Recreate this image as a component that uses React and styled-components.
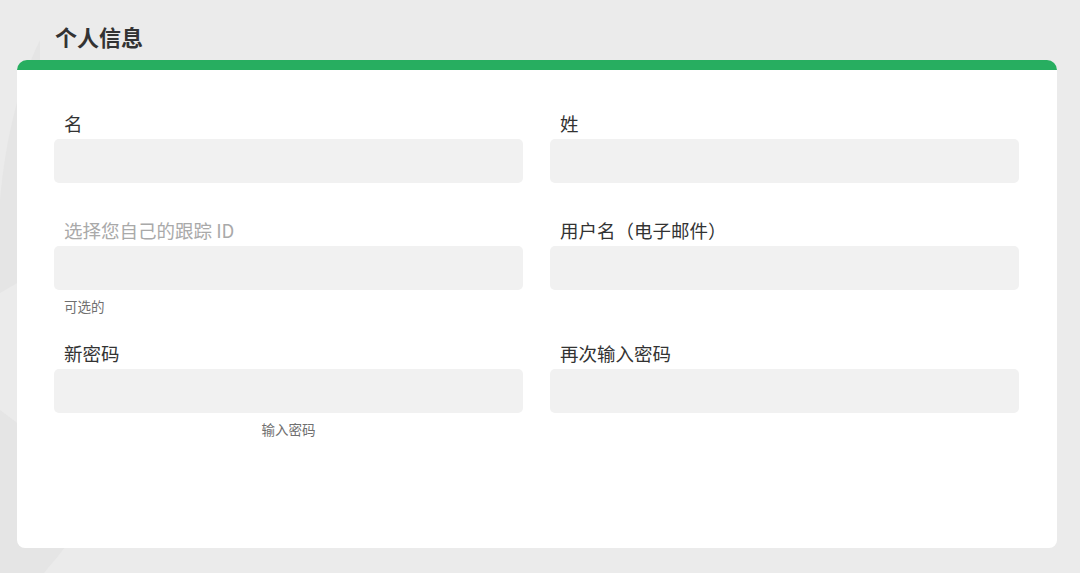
import React from "react";
import styled, { createGlobalStyle } from "styled-components";

const GlobalStyle = createGlobalStyle`
  html, body {
    margin: 0;
    padding: 0;
    background: #ebebeb;
  }
  body {
    font-family: "Noto Sans CJK SC", "Noto Sans", sans-serif;
    color: #333;
  }
  * { box-sizing: border-box; }
`;

const Page = styled.div`
  position: relative;
  width: 1080px;
  height: 573px;
  overflow: hidden;
  padding: 21px 23px 0 17px;
`;

const Decoration = styled.svg`
  position: absolute;
  left: 0;
  top: 0;
  width: 1080px;
  height: 573px;
  z-index: 0;
`;

const Content = styled.div`
  position: relative;
  z-index: 1;
`;

const Title = styled.h1`
  margin: 0 0 9px 38px;
  font-size: 22px;
  line-height: 30px;
  font-weight: 700;
  color: #333;
`;

const Card = styled.section`
  width: 1040px;
  height: 488px;
  background: #fff;
  border-top: 10px solid #27ae60;
  border-radius: 10px 10px 8px 8px;
  padding: 41px 38px 0 37px;
  display: flex;
  flex-direction: column;
`;

const Row = styled.div`
  display: grid;
  grid-template-columns: 469px 469px;
  column-gap: 27px;
  align-items: start;
  margin-top: ${(p) => p.$top || 0}px;
`;

const Field = styled.div`
  display: flex;
  flex-direction: column;
`;

const Label = styled.label`
  display: block;
  padding-left: 10px;
  margin-bottom: 4px;
  font-size: 18.5px;
  line-height: 24px;
  color: ${(p) => (p.$muted ? "#a9a9a9" : "#333")};
`;

const Input = styled.input`
  display: block;
  width: 100%;
  height: 44px;
  border: none;
  border-radius: 5px;
  background: #f1f1f1;
  outline: none;
  font-family: inherit;
  font-size: 16px;
  padding: 0 10px;
`;

const Hint = styled.div`
  margin-top: 6px;
  padding-left: ${(p) => (p.$center ? 0 : 10)}px;
  font-size: 13.5px;
  line-height: 20px;
  color: #6f6f6f;
  text-align: ${(p) => (p.$center ? "center" : "left")};
`;

export default function App() {
  return (
    <>
      <GlobalStyle />
      <Page>
        <Decoration viewBox="0 0 1080 573" aria-hidden="true">
          <path d="M40 40 C 20 80, 5 140, 0 200 L 0 293 L 40 270 Z" fill="#e5e5e5" />
          <path d="M0 410 L 40 440 L 70 540 C 60 555, 50 565, 44 573 L 0 573 Z" fill="#e5e5e5" />
        </Decoration>
        <Content>
          <Title>个人信息</Title>
          <Card>
            <Row>
              <Field>
                <Label>名</Label>
                <Input type="text" />
              </Field>
              <Field>
                <Label>姓</Label>
                <Input type="text" />
              </Field>
            </Row>
            <Row $top={35}>
              <Field>
                <Label $muted>选择您自己的跟踪 ID</Label>
                <Input type="text" />
                <Hint>可选的</Hint>
              </Field>
              <Field>
                <Label>用户名（电子邮件）</Label>
                <Input type="email" />
              </Field>
            </Row>
            <Row $top={25}>
              <Field>
                <Label>新密码</Label>
                <Input type="password" />
                <Hint $center>输入密码</Hint>
              </Field>
              <Field>
                <Label>再次输入密码</Label>
                <Input type="password" />
              </Field>
            </Row>
          </Card>
        </Content>
      </Page>
    </>
  );
}
